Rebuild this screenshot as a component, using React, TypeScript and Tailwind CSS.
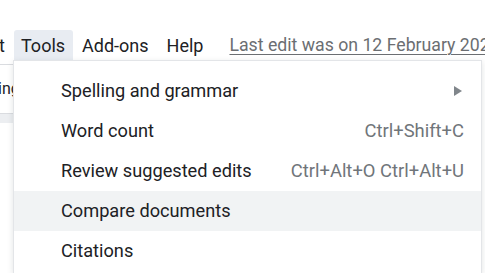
import React from "react";

const items = [
  { label: "Spelling and grammar", arrow: true },
  { label: "Word count", shortcut: "Ctrl+Shift+C" },
  { label: "Review suggested edits", shortcut: "Ctrl+Alt+O Ctrl+Alt+U" },
  { label: "Compare documents", active: true },
  { label: "Citations" },
];

export default function App() {
  return (
    <div
      className="w-[485px] h-[273px] overflow-hidden bg-white flex flex-col"
      style={{ fontFamily: "Roboto, 'Noto Sans', sans-serif" }}
    >
      <div className="h-[30px] shrink-0" />
      <div className="h-[30px] shrink-0 flex items-center text-[18px] text-[#202124] whitespace-nowrap overflow-hidden">
        <div className="w-[14px] shrink-0 h-full flex items-center">
          <span className="-ml-[1px]">t</span>
        </div>
        <div className="shrink-0 h-full flex items-center pl-[7px] pr-[8px] bg-[#e8ecf2] rounded-t-[3px]">Tools</div>
        <div className="shrink-0 h-full flex items-center pl-[9px] pr-[8px]">Add-ons</div>
        <div className="shrink-0 h-full flex items-center pl-[10px] pr-[10px]">Help</div>
        <div className="shrink-0 ml-[16px] text-[#6b6e72] underline decoration-[1px] underline-offset-[3px] text-[17.7px]">
          Last edit was on 12 February 2021
        </div>
      </div>
      <div className="flex flex-1 min-h-0">
        <div className="w-[13px] shrink-0 flex flex-col overflow-hidden">
          <div className="h-[4px]" />
          <div className="h-px bg-[#dadce0]" />
          <div className="h-[48px] flex items-center text-[16px] text-[#202124] whitespace-nowrap">
            <span className="-ml-[2px]">ing</span>
          </div>
          <div className="h-[10px] bg-[#eceef1] border-t border-[#dadce0]" />
        </div>
        <div className="flex-1 mr-[3px] bg-white border-l border-r border-t border-[#e3e5e8] shadow-[0_2px_6px_rgba(60,64,67,0.15)] pt-[10px] flex flex-col">
          {items.map((it) => (
            <div
              key={it.label}
              className={`h-[40px] shrink-0 flex items-center pl-[47px] pr-[17px] text-[18.2px] whitespace-nowrap ${
                it.active ? "bg-[#f1f3f4]" : ""
              }`}
            >
              <span className="text-[#202124]">{it.label}</span>
              <span className="flex-1" />
              {it.shortcut && <span className="text-[#70757a] text-[18.4px]">{it.shortcut}</span>}
              {it.arrow && (
                <svg width="8" height="10" viewBox="0 0 8 10" className="mr-[2px]">
                  <path d="M0 0 L8 5 L0 10 Z" fill="#80868b" />
                </svg>
              )}
            </div>
          ))}
        </div>
      </div>
    </div>
  );
}
